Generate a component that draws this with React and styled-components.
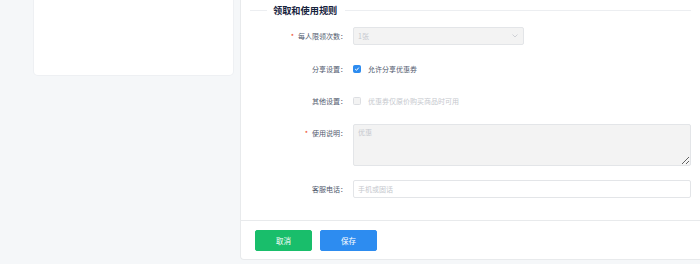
import React from 'react';
import styled, { createGlobalStyle } from 'styled-components';

const GlobalStyle = createGlobalStyle`
  html, body {
    margin: 0;
    padding: 0;
    background: #f5f7f9;
    overflow: hidden;
    font-family: "Noto Sans CJK SC", "Liberation Sans", sans-serif;
  }
`;

const Page = styled.div`
  display: flex;
  align-items: flex-start;
  gap: 7px;
  padding-left: 34px;
  height: 264px;
`;

const SideCard = styled.div`
  width: 199px;
  height: 75px;
  flex-shrink: 0;
  background: #fff;
  border-radius: 0 0 4px 4px;
  box-shadow: 0 0 0 1px #eef0f3;
`;

const Main = styled.div`
  width: 461px;
  flex-shrink: 0;
  display: flex;
  flex-direction: column;
`;

const FormCard = styled.div`
  height: 220px;
  background: #fff;
  border-left: 1px solid #e8eaec;
  padding: 0 10px 0 9px;
  box-sizing: border-box;
`;

const Footer = styled.div`
  height: 40px;
  background: #fff;
  border: 1px solid #e8eaec;
  border-right: none;
  border-radius: 0 0 0 4px;
  box-sizing: border-box;
  display: flex;
  align-items: center;
  gap: 8px;
  padding-left: 14px;
`;

const Divider = styled.div`
  display: flex;
  align-items: center;
  height: 20px;
  margin-bottom: 7px;

  &::before {
    content: '';
    width: 17px;
    height: 1px;
    background: #eceef1;
    margin-right: 6px;
  }

  &::after {
    content: '';
    flex: 1;
    height: 1px;
    background: #eceef1;
    margin-left: 8px;
  }
`;

const Title = styled.span`
  font-size: 9.2px;
  font-weight: 700;
  color: #17233d;
  line-height: 12px;
`;

const Row = styled.div`
  display: flex;
  align-items: ${p => (p.top ? 'flex-start' : 'center')};
  margin-bottom: ${p => p.gap || 14}px;
`;

const Label = styled.label`
  width: 103px;
  flex-shrink: 0;
  text-align: right;
  padding-right: 6px;
  box-sizing: border-box;
  font-size: 7px;
  line-height: 18px;
  color: #515a6e;
  white-space: nowrap;

  ${p => p.required && `
    &::before {
      content: '*';
      color: #ed4014;
      margin-right: 4px;
      font-size: 7px;
    }
  `}
`;

const Select = styled.div`
  width: 171px;
  height: 18px;
  box-sizing: border-box;
  border: 1px solid #e3e5e8;
  border-radius: 2px;
  background: #f3f3f3;
  display: flex;
  align-items: center;
  justify-content: space-between;
  padding: 0 5px 0 4px;
  font-size: 7px;
  color: #c5c8ce;
`;

const CheckLine = styled.label`
  display: flex;
  align-items: center;
  height: 18px;
  font-size: 7px;
  color: ${p => (p.disabled ? '#c5c8ce' : '#515a6e')};
`;

const Box = styled.span`
  width: 8px;
  height: 8px;
  box-sizing: border-box;
  border-radius: 1.5px;
  margin-right: 7px;
  display: inline-flex;
  align-items: center;
  justify-content: center;
  background: ${p => (p.checked ? '#2d8cf0' : '#f3f3f3')};
  border: 1px solid ${p => (p.checked ? '#2d8cf0' : '#dcdee2')};
`;

const TextArea = styled.textarea`
  width: 338px;
  height: 42px;
  box-sizing: border-box;
  border: 1px solid #e3e5e8;
  border-radius: 2px;
  background: #f3f3f3;
  padding: 2px 4px;
  font-family: inherit;
  font-size: 7px;
  line-height: 11px;
  color: #c5c8ce;
  resize: vertical;
  margin: 0;
  outline: none;
`;

const Input = styled.input`
  width: 338px;
  height: 18px;
  box-sizing: border-box;
  border: 1px solid #e3e5e8;
  border-radius: 2px;
  background: #fff;
  padding: 0 4px;
  font-family: inherit;
  font-size: 7px;
  outline: none;

  &::placeholder {
    color: #c5c8ce;
  }
`;

const Button = styled.button`
  width: 57px;
  height: 21px;
  border-radius: 2px;
  border: 1px solid ${p => p.color};
  background: ${p => p.color};
  color: #fff;
  font-family: inherit;
  font-size: 7.5px;
  padding: 0;
  cursor: pointer;
`;

const Chevron = () => (
  <svg width="6" height="4" viewBox="0 0 6 4">
    <path d="M0.5 0.5 L3 3 L5.5 0.5" fill="none" stroke="#c5c8ce" strokeWidth="0.8" />
  </svg>
);

const Tick = () => (
  <svg width="6" height="6" viewBox="0 0 6 6">
    <path d="M1.2 3.1 L2.5 4.3 L4.8 1.6" fill="none" stroke="#fff" strokeWidth="1" />
  </svg>
);

export default function App() {
  return (
    <>
      <GlobalStyle />
      <Page>
        <SideCard />
        <Main>
          <FormCard>
            <Divider>
              <Title>领取和使用规则</Title>
            </Divider>
            <Row gap={15}>
              <Label required>每人限领次数：</Label>
              <Select>
                <span>1张</span>
                <Chevron />
              </Select>
            </Row>
            <Row>
              <Label>分享设置：</Label>
              <CheckLine>
                <Box checked><Tick /></Box>
                允许分享优惠券
              </CheckLine>
            </Row>
            <Row>
              <Label>其他设置：</Label>
              <CheckLine disabled>
                <Box />
                优惠券仅原价购买商品时可用
              </CheckLine>
            </Row>
            <Row top>
              <Label required>使用说明：</Label>
              <TextArea disabled value="优惠" readOnly />
            </Row>
            <Row>
              <Label>客服电话：</Label>
              <Input placeholder="手机或固话" />
            </Row>
          </FormCard>
          <Footer>
            <Button color="#19be6b">取消</Button>
            <Button color="#2d8cf0">保存</Button>
          </Footer>
        </Main>
      </Page>
    </>
  );
}
